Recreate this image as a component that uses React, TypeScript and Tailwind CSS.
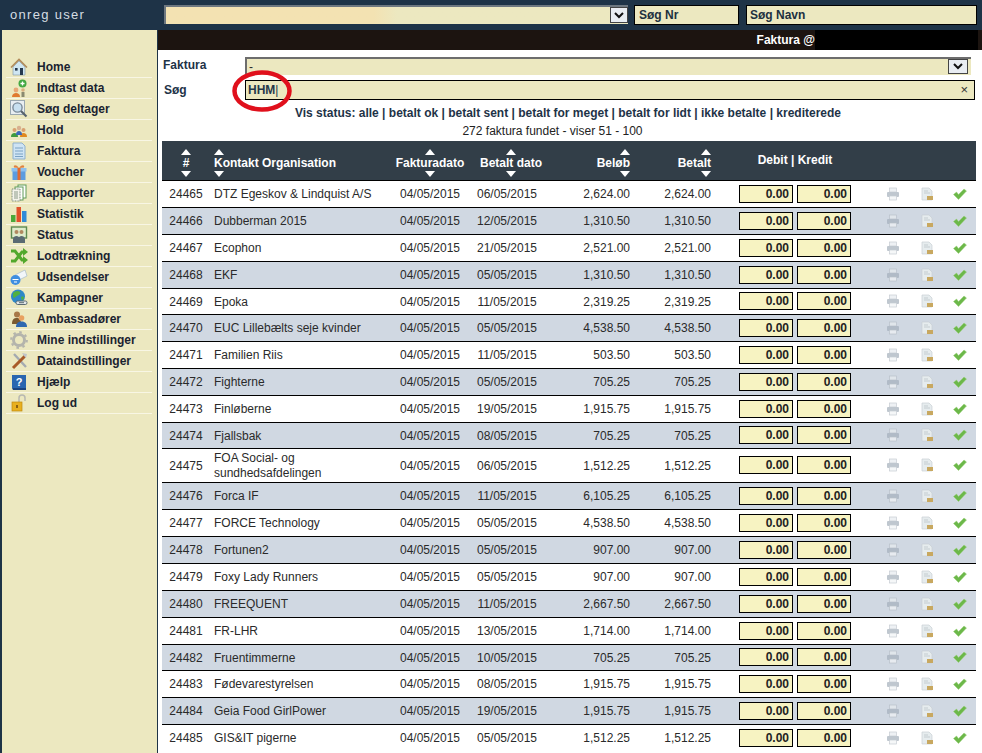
import React from "react";

const rows: [string, string | string[], string, string, string][] = [
  ["24465", "DTZ Egeskov & Lindquist A/S", "06/05/2015", "2,624.00", "2,624.00"],
  ["24466", "Dubberman 2015", "12/05/2015", "1,310.50", "1,310.50"],
  ["24467", "Ecophon", "21/05/2015", "2,521.00", "2,521.00"],
  ["24468", "EKF", "05/05/2015", "1,310.50", "1,310.50"],
  ["24469", "Epoka", "11/05/2015", "2,319.25", "2,319.25"],
  ["24470", "EUC Lillebælts seje kvinder", "05/05/2015", "4,538.50", "4,538.50"],
  ["24471", "Familien Riis", "11/05/2015", "503.50", "503.50"],
  ["24472", "Fighterne", "05/05/2015", "705.25", "705.25"],
  ["24473", "Finløberne", "19/05/2015", "1,915.75", "1,915.75"],
  ["24474", "Fjallsbak", "08/05/2015", "705.25", "705.25"],
  ["24475", ["FOA Social- og", "sundhedsafdelingen"], "06/05/2015", "1,512.25", "1,512.25"],
  ["24476", "Forca IF", "11/05/2015", "6,105.25", "6,105.25"],
  ["24477", "FORCE Technology", "05/05/2015", "4,538.50", "4,538.50"],
  ["24478", "Fortunen2", "05/05/2015", "907.00", "907.00"],
  ["24479", "Foxy Lady Runners", "05/05/2015", "907.00", "907.00"],
  ["24480", "FREEQUENT", "11/05/2015", "2,667.50", "2,667.50"],
  ["24481", "FR-LHR", "13/05/2015", "1,714.00", "1,714.00"],
  ["24482", "Fruentimmerne", "10/05/2015", "705.25", "705.25"],
  ["24483", "Fødevarestyrelsen", "08/05/2015", "1,915.75", "1,915.75"],
  ["24484", "Geia Food GirlPower", "19/05/2015", "1,915.75", "1,915.75"],
  ["24485", "GIS&IT pigerne", "05/05/2015", "1,512.25", "1,512.25"],
];

const rowHeight = (i: number) => {
  if (i === 10) return "h-[34px]";
  if (i === 4 || i === 9 || i === 17) return "h-[26px]";
  return "h-[27px]";
};

const Ico = ({ children }: { children: React.ReactNode }) => (
  <svg width="18" height="18" viewBox="0 0 18 18" className="shrink-0">
    {children}
  </svg>
);

const icons: Record<string, React.ReactNode> = {
  Home: (
    <Ico>
      <path d="M3 9v8h12V9L9 3z" fill="#cfe6f2" stroke="#7f93a3" strokeWidth=".6" />
      <path d="M1 9.500 9 1.500l8 8" fill="none" stroke="#b08a5a" strokeWidth="1.600" />
      <rect x="10" y="10" width="3" height="7" fill="#26394f" />
      <rect x="5" y="10" width="2.600" height="2.600" fill="#26394f" />
    </Ico>
  ),
  "Indtast data": (
    <Ico>
      <circle cx="6" cy="11" r="2.400" fill="#e8a878" />
      <path d="M2 18c0-3 2-4 4-4s4 1 4 4z" fill="#e07a30" />
      <circle cx="12.500" cy="4.500" r="4" fill="#43a843" />
      <path d="M12.500 2.500v4M10.500 4.500h4" stroke="#fff" strokeWidth="1.300" />
      <circle cx="13" cy="11" r="1.800" fill="#d8b080" />
      <path d="M11.500 18v-5h3v5z" fill="#8a8a70" />
    </Ico>
  ),
  "Søg deltager": (
    <Ico>
      <rect x="0.500" y="0.500" width="14" height="14" fill="#e8eef2" stroke="#9aa8b0" />
      <circle cx="7.500" cy="7.500" r="4.600" fill="#c8e0f0" stroke="#7a8a98" strokeWidth="1.400" />
      <path d="m11 11 5.500 5.500" stroke="#58646e" strokeWidth="2.200" />
    </Ico>
  ),
  Hold: (
    <Ico>
      <circle cx="4.500" cy="9" r="2" fill="#d8a070" />
      <path d="M1 16c0-3 1.500-4 3.500-4S8 13 8 16z" fill="#3f9a3f" />
      <circle cx="13.500" cy="9" r="2" fill="#d8a070" />
      <path d="M10 16c0-3 1.500-4 3.500-4s3.500 1 3.500 4z" fill="#e08a20" />
      <circle cx="9" cy="7" r="2.200" fill="#d8b090" />
      <path d="M6 14c0-3 1.200-4 3-4s3 1 3 4z" fill="#3a68b8" />
    </Ico>
  ),
  Faktura: (
    <Ico>
      <path d="M3 1h9l3 3v13H3z" fill="#cfe4f4" stroke="#8fb0cc" />
      <path d="M5 6h8M5 9h8M5 12h8M5 14.500h8" stroke="#7aa2c4" />
    </Ico>
  ),
  Voucher: (
    <Ico>
      <rect x="2.500" y="8" width="13" height="9" fill="#5c9ce0" />
      <rect x="1.500" y="5" width="15" height="3.500" fill="#8cc0f0" />
      <rect x="7.500" y="5" width="3" height="12" fill="#e06a30" />
      <path d="M9 5C6 1 3 2 4 4.500zM9 5c3-4 6-3 5-.5z" fill="#e08040" />
    </Ico>
  ),
  Rapporter: (
    <Ico>
      <rect x="8" y="1" width="8" height="13" fill="#fff" stroke="#5e9a58" />
      <rect x="5" y="3" width="8" height="13" fill="#fff" stroke="#5e9a58" />
      <rect x="2" y="5" width="8" height="12" fill="#f4f4ec" stroke="#7a8a78" strokeDasharray="1 .6" />
      <path d="M4 8h4M4 10h4M4 12h4M4 14h4" stroke="#8a9a88" />
    </Ico>
  ),
  Statistik: (
    <Ico>
      <rect x="1" y="10" width="4.500" height="7" fill="#4aa83a" />
      <rect x="6.500" y="2" width="4.500" height="15" fill="#e0502a" />
      <rect x="12" y="6" width="4.500" height="11" fill="#2f8ad8" />
    </Ico>
  ),
  Status: (
    <Ico>
      <rect x="1.500" y="1" width="15" height="11" fill="#dfeccb" stroke="#5e8a50" strokeWidth="1.400" />
      <circle cx="6.500" cy="6" r="2" fill="#b08860" />
      <circle cx="11.500" cy="6" r="2" fill="#b08860" />
      <path d="M3 17v-4c0-2 2-3 3.500-3s3 1 3 3v4zM8.500 17v-4c0-2 1.500-3 3-3s3.500 1 3.500 3v4z" fill="#5a6a72" />
    </Ico>
  ),
  Lodtrækning: (
    <Ico>
      <path d="M1 4h4l7 9h2M1 14h4l7-9h2" fill="none" stroke="#52a82c" strokeWidth="3" />
      <path d="m13 1 5 4-5 4zm0 8 5 4-5 4z" fill="#52a82c" />
    </Ico>
  ),
  Udsendelser: (
    <Ico>
      <path d="M5 7 15 2l2 6-10 5z" fill="#f2f6fa" stroke="#a8bccc" strokeWidth=".7" />
      <circle cx="5.500" cy="12" r="5" fill="#3f8ee0" />
      <path d="M2.500 11.500h6M4 14h3" stroke="#fff" strokeWidth="1.200" />
    </Ico>
  ),
  Kampagner: (
    <Ico>
      <circle cx="8" cy="7.500" r="7" fill="#2f88c8" />
      <path d="M3 4c2-2 5-3 7-1 1 2-1 3-3 4s-3 3-4 1zM11 8c2-1 3 0 3 1l-2 3z" fill="#52b040" />
      <rect x="6" y="12" width="11" height="3.500" rx="1.600" fill="#e4e8ea" stroke="#5a6a72" />
      <path d="M9 13.700h5" stroke="#5a6a72" />
    </Ico>
  ),
  Ambassadører: (
    <Ico>
      <circle cx="7" cy="4.500" r="3" fill="#a87848" />
      <path d="M2 14c0-5 2-6 5-6s4 2 4 6z" fill="#7a5a30" />
      <circle cx="11.500" cy="8" r="2.800" fill="#e8a060" />
      <path d="M6 17c0-4 2.500-5.500 5.500-5.500S17 13 17 17z" fill="#2f68b0" />
    </Ico>
  ),
  "Mine indstillinger": (
    <Ico>
      <circle cx="9" cy="9" r="5.500" fill="none" stroke="#b4b4ac" strokeWidth="3" />
      <circle cx="9" cy="9" r="7.800" fill="none" stroke="#b4b4ac" strokeWidth="2.200" strokeDasharray="2.500 3.630" />
    </Ico>
  ),
  Dataindstillinger: (
    <Ico>
      <path d="M4 2 16 15" stroke="#a4aab0" strokeWidth="2.400" />
      <path d="M15 4 3 16" stroke="#a85a28" strokeWidth="3" />
      <path d="m12 1 5 1-1 4-2-2z" fill="#c0c4c8" />
    </Ico>
  ),
  Hjælp: (
    <Ico>
      <path d="M2 2h14v13H2z" fill="#2a66b0" />
      <path d="M2 15h14v2H3z" fill="#1c4480" />
      <text x="9" y="13" fontSize="11" fontWeight="700" fill="#fff" textAnchor="middle" fontFamily="Liberation Sans">?</text>
    </Ico>
  ),
  "Log ud": (
    <Ico>
      <path d="M9 8V4c0-4 6-4 6 0v3" fill="none" stroke="#b8b8b0" strokeWidth="1.500" />
      <rect x="2" y="8" width="10" height="9" fill="#e8b020" stroke="#c08a10" strokeWidth=".7" />
      <rect x="6" y="11" width="2" height="3" fill="#8a6010" />
    </Ico>
  ),
};

const menu = Object.keys(icons);

const SortUp = () => (
  <span className="block h-0 w-0 border-x-[5px] border-x-transparent border-b-[6px] border-b-white" />
);
const SortDown = () => (
  <span className="block h-0 w-0 border-x-[5px] border-x-transparent border-t-[6px] border-t-white" />
);

const HeadCell = ({ label, align }: { label: string; align: string }) => (
  <div className={`flex flex-col ${align}`}>
    <SortUp />
    <span className="my-[1px] leading-[14px] whitespace-nowrap">{label}</span>
    <SortDown />
  </div>
);

const Printer = () => (
  <svg width="14" height="14" viewBox="0 0 14 14" className="mx-auto opacity-70">
    <rect x="3.500" y="1" width="7" height="4" fill="#e8ecf0" stroke="#b0b8c0" strokeWidth=".7" />
    <rect x="1" y="5" width="12" height="5" rx="1" fill="#a4b0bc" />
    <rect x="3.500" y="9" width="7" height="4" fill="#f2f4f6" stroke="#b0b8c0" strokeWidth=".7" />
  </svg>
);
const Doc = () => (
  <svg width="14" height="14" viewBox="0 0 14 14" className="mx-auto">
    <path d="M2 1h7l3 3v9H2z" fill="#e6ecee" stroke="#c8d0d4" strokeWidth=".7" />
    <path d="M4 4h4M4 6h6" stroke="#c4ccd0" />
    <rect x="7" y="9" width="6" height="4" fill="#c8a860" />
  </svg>
);
const Check = () => (
  <svg width="14" height="12" viewBox="0 0 14 12" className="mx-auto">
    <path d="M.5 6.500 3.500 4 5.500 6.500 11 1 13.500 3 5.500 11.500z" fill="#6cb84a" stroke="#9ad078" strokeWidth=".5" />
  </svg>
);

const Amount = () => (
  <div className="w-[54px] h-[18px] border border-black bg-[#f7f3c2] text-right pr-[3px] font-bold leading-[17px] text-[#222]">0.00</div>
);

const Chevron = () => (
  <svg width="10" height="7" viewBox="0 0 10 7"><path d="m1 1 4 4 4-4" fill="none" stroke="#111" strokeWidth="2" /></svg>
);

export default function App() {
  return (
    <div className="h-[753px] w-[982px] overflow-hidden bg-[#1e3347] text-[12px] text-[#2a2a2a] [font-family:'Liberation_Sans',Arial,sans-serif] flex flex-col">
      <header className="h-[30px] flex shrink-0">
        <div className="w-[164px] pl-[10px] pt-[7px] text-[13px] leading-[16px] tracking-[1.300px] text-[#d5dde3]">onreg user</div>
        <div className="w-[464px] h-[19px] mt-[5px] border-t-2 border-l-2 border-[#6d7780] flex items-stretch bg-gradient-to-r from-[#f3e2b2] from-45% to-[#ece8c0] to-50%">
          <div className="flex-1" />
          <div className="w-[18px] mb-[1px] border border-[#444] bg-[#e9edf2] flex items-center justify-center">
            <Chevron />
          </div>
        </div>
        <div className="ml-[6px] w-[105px] h-[20px] mt-[5px] border border-black bg-[#ece8c0] pl-[4px] font-bold leading-[18px] text-[#20303f]">Søg Nr</div>
        <div className="ml-[7px] w-[231px] h-[20px] mt-[5px] border border-black bg-[#ece8c0] pl-[3px] font-bold leading-[18px] text-[#20303f]">Søg Navn</div>
      </header>

      <div className="flex flex-1 min-h-0">
        <aside className="ml-[2px] w-[155px] bg-[#ece8c0] pt-[27px] pl-[4px] pr-[5px] shrink-0">
          {menu.map((m) => (
            <div key={m} className="h-[21px] flex items-center border-b border-[#f8f6e4] font-bold text-[12px] text-[#1a2330]">
              <span className="w-[31px] pl-[4px] flex">{icons[m]}</span>
              <span className="whitespace-nowrap">{m}</span>
            </div>
          ))}
        </aside>

        <main className="relative ml-[1px] flex-1 bg-white min-w-0">
          <div className="h-[20px] bg-[#1c1410] flex justify-end">
            <div className="font-bold text-white leading-[20px]">Faktura @</div>
            <div className="w-[163px] mr-[4px] bg-black" />
          </div>

          <div className="pt-[7px] pl-[5px] h-[91px]">
            <div className="flex h-[23px]">
              <div className="w-[82px] pt-[1px] font-bold leading-[15px] text-[#1e3347]">Faktura</div>
              <div className="w-[726px] h-[18px] border-t-2 border-l-2 border-[#6d6d6d] bg-[#ece8c0] flex pl-[2px]">
                <span className="flex-1 leading-[17px]">-</span>
                <div className="w-[20px] h-[15px] mr-[3px] border border-[#444] bg-[#e9edf2] flex items-center justify-center">
                  <Chevron />
                </div>
              </div>
            </div>
            <div className="flex h-[20px]">
              <div className="w-[82px] pl-[1px] pt-[1px] font-bold leading-[18px] text-[#1e3347]">Søg</div>
              <div className="w-[730px] h-[20px] border border-black bg-[#ece8c0] flex pl-[2px] pr-[6px] items-center justify-between">
                <span className="font-bold text-[#26384a]">HHM<span className="font-normal">|</span></span>
                <span className="text-[13px] text-[#333]">×</span>
              </div>
            </div>
            <div className="mt-[5px] w-[810px] text-center font-bold leading-[16px] text-[#1e3347]">
              Vis status: alle | betalt ok | betalt sent | betalt for meget | betalt for lidt | ikke betalte | krediterede
            </div>
            <div className="mt-[2px] w-[779px] text-center leading-[16px] text-[#222]">272 faktura fundet - viser 51 - 100</div>
          </div>

          <svg width="64" height="46" viewBox="0 0 64 46" className="absolute left-[72px] top-[38px]">
            <ellipse cx="32" cy="23" rx="27.500" ry="18.500" fill="none" stroke="#e0101c" strokeWidth="4.500" />
          </svg>

          <table className="ml-[4px] w-[814px] table-fixed border-collapse">
            <colgroup>
              <col className="w-[48px]" />
              <col className="w-[184px]" />
              <col className="w-[72px]" />
              <col className="w-[82px]" />
              <col className="w-[82px]" />
              <col className="w-[81px]" />
              <col className="w-[165px]" />
              <col className="w-[34px]" />
              <col className="w-[33px]" />
              <col className="w-[33px]" />
            </colgroup>
            <thead>
              <tr className="h-[39px] bg-[#323e48] text-white">
                <th className="align-top pt-[8px] font-bold"><HeadCell label="#" align="items-center" /></th>
                <th className="align-top pt-[8px] pl-[4px] font-bold"><HeadCell label="Kontakt Organisation" align="items-start" /></th>
                <th className="align-top pt-[8px] font-bold"><HeadCell label="Fakturadato" align="items-center" /></th>
                <th className="align-top pt-[8px] pl-[8px] font-bold"><HeadCell label="Betalt dato" align="items-center" /></th>
                <th className="align-top pt-[8px] font-bold"><HeadCell label="Beløb" align="items-end" /></th>
                <th className="align-top pt-[8px] font-bold"><HeadCell label="Betalt" align="items-end" /></th>
                <th className="align-top pt-[12px] pl-[3px] text-center font-bold leading-[14px]">Debit | Kredit</th>
                <th colSpan={3} />
              </tr>
            </thead>
            <tbody>
              {rows.map((r, i) => (
                <tr key={r[0]} className={`${rowHeight(i)} border-t border-black leading-[15px] ${i % 2 ? "bg-[#d0d8e2]" : "bg-white"}`}>
                  <td className="pt-[2px] text-center">{r[0]}</td>
                  <td className="pt-[2px] pl-[4px]">
                    {Array.isArray(r[1]) ? r[1].map((l) => <div key={l}>{l}</div>) : r[1]}
                  </td>
                  <td className="pt-[2px] text-center">04/05/2015</td>
                  <td className="pt-[2px] text-center">{r[2]}</td>
                  <td className="pt-[2px] text-right">{r[3]}</td>
                  <td className="pt-[2px] text-right">{r[4]}</td>
                  <td>
                    <div className="flex gap-[4px] pl-[28px]">
                      <Amount />
                      <Amount />
                    </div>
                  </td>
                  <td><Printer /></td>
                  <td><Doc /></td>
                  <td><Check /></td>
                </tr>
              ))}
            </tbody>
          </table>
        </main>
      </div>
    </div>
  );
}
